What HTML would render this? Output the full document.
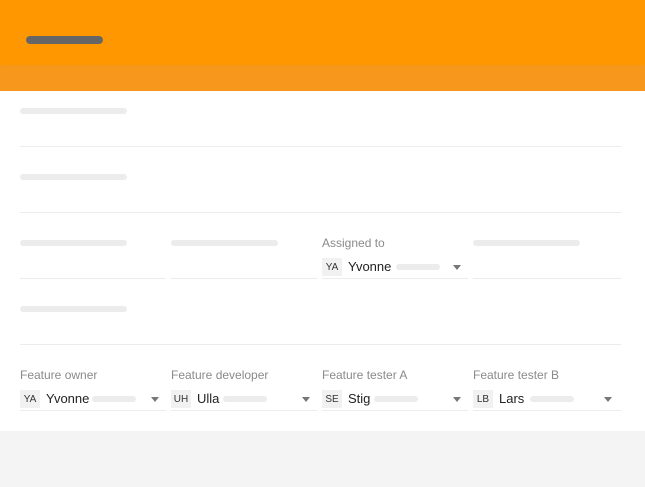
<!DOCTYPE html>
<html><head><style>
*{margin:0;padding:0;box-sizing:border-box}
body{width:645px;height:487px;background:#f4f4f4;font-family:"Liberation Sans",Arial,sans-serif;position:relative;overflow:hidden}
.hdr{position:absolute;left:0;top:0;width:645px;height:65px;background:#ff9800}
.hdr2{position:absolute;left:0;top:65px;width:645px;height:26px;background:#f7971c;box-shadow:0 2px 3px rgba(0,0,0,.12)}
.logo{position:absolute;left:26px;top:36px;width:77px;height:8px;background:#666;border-radius:4px}
.main{position:absolute;left:0;top:91px;width:645px;height:340px;background:#fff}
.sk{position:absolute;height:6px;width:107px;background:#ececec;border-radius:3px}
.ln{position:absolute;height:1px;background:#ececec}
.lbl{position:absolute;font-size:12px;color:#8a8a8a}
.val{position:absolute;height:20px;width:146px}
.bd{position:absolute;left:0;top:1px;width:20px;height:18px;background:#f1f1f1;font-size:10px;color:#333;text-align:center;line-height:19px}
.nm{position:absolute;left:26px;top:2px;font-size:13px;color:#222}
.sb{position:absolute;top:7px;width:44px;height:6px;background:#ececec;border-radius:3px}
.ar{position:absolute;left:131px;top:8px;width:0;height:0;border-left:4px solid transparent;border-right:4px solid transparent;border-top:5px solid #777}
</style></head><body>
<div class="hdr"><div class="logo"></div></div>
<div class="hdr2"></div>
<div class="main"></div>
<div class="sk" style="left:20px;top:108px"></div>
<div class="ln" style="left:20px;top:146px;width:601px"></div>
<div class="sk" style="left:20px;top:174px"></div>
<div class="ln" style="left:20px;top:212px;width:601px"></div>
<div class="sk" style="left:20px;top:240px"></div>
<div class="sk" style="left:171px;top:240px"></div>
<div class="sk" style="left:473px;top:240px"></div>
<div class="lbl" style="left:322px;top:236px">Assigned to</div>
<div class="val" style="left:322px;top:257px"><div class="bd">YA</div><div class="nm">Yvonne</div><div class="sb" style="left:74px"></div><div class="ar"></div></div>
<div class="ln" style="left:20px;top:278px;width:146px"></div>
<div class="ln" style="left:171px;top:278px;width:146px"></div>
<div class="ln" style="left:322px;top:278px;width:146px"></div>
<div class="ln" style="left:473px;top:278px;width:148px"></div>
<div class="sk" style="left:20px;top:306px"></div>
<div class="ln" style="left:20px;top:344px;width:601px"></div>
<div class="lbl" style="left:20px;top:368px">Feature owner</div>
<div class="lbl" style="left:171px;top:368px">Feature developer</div>
<div class="lbl" style="left:322px;top:368px">Feature tester A</div>
<div class="lbl" style="left:473px;top:368px">Feature tester B</div>
<div class="val" style="left:20px;top:389px"><div class="bd">YA</div><div class="nm">Yvonne</div><div class="sb" style="left:72px"></div><div class="ar"></div></div>
<div class="val" style="left:171px;top:389px"><div class="bd">UH</div><div class="nm">Ulla</div><div class="sb" style="left:52px"></div><div class="ar"></div></div>
<div class="val" style="left:322px;top:389px"><div class="bd">SE</div><div class="nm">Stig</div><div class="sb" style="left:52px"></div><div class="ar"></div></div>
<div class="val" style="left:473px;top:389px"><div class="bd">LB</div><div class="nm">Lars</div><div class="sb" style="left:57px"></div><div class="ar"></div></div>
<div class="ln" style="left:20px;top:410px;width:146px"></div>
<div class="ln" style="left:171px;top:410px;width:146px"></div>
<div class="ln" style="left:322px;top:410px;width:146px"></div>
<div class="ln" style="left:473px;top:410px;width:148px"></div>
</body></html>
